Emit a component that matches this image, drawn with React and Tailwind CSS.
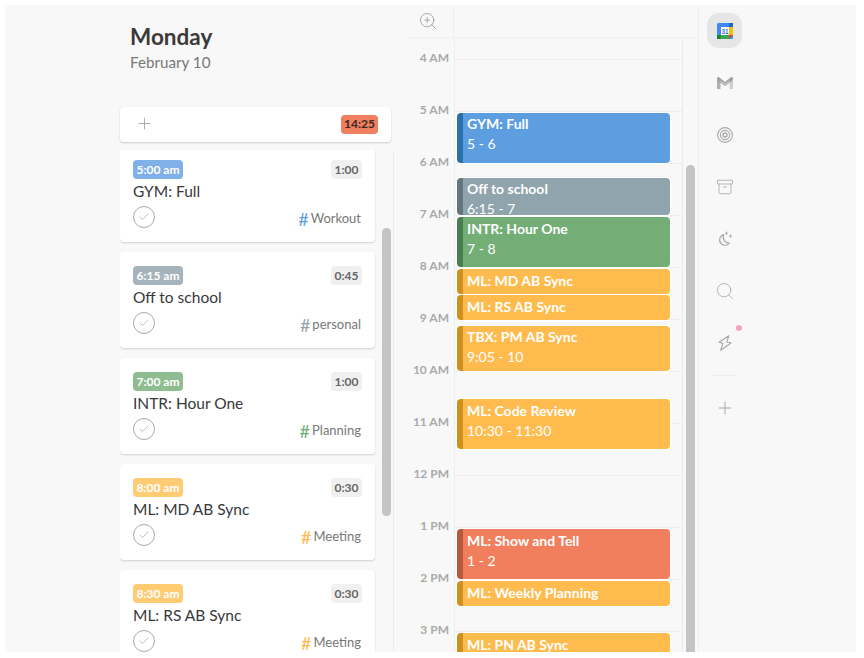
import React from "react";
import { Plus, Search, Archive, ZoomIn, Check } from "lucide-react";

const cards = [
  { time: "5:00 am", timeBg: "bg-[#7fb0e8]", dur: "1:00", title: "GYM: Full", tag: "Workout", hash: "text-[#5c9ee0]" },
  { time: "6:15 am", timeBg: "bg-[#a5b4bc]", dur: "0:45", title: "Off to school", tag: "personal", hash: "text-[#90a4ae]" },
  { time: "7:00 am", timeBg: "bg-[#8fbc90]", dur: "1:00", title: "INTR: Hour One", tag: "Planning", hash: "text-[#73ae76]" },
  { time: "8:00 am", timeBg: "bg-[#ffcb73]", dur: "0:30", title: "ML: MD AB Sync", tag: "Meeting", hash: "text-[#ffb84d]" },
  { time: "8:30 am", timeBg: "bg-[#ffcb73]", dur: "0:30", title: "ML: RS AB Sync", tag: "Meeting", hash: "text-[#ffb84d]" },
];

const hours = ["4 AM", "5 AM", "6 AM", "7 AM", "8 AM", "9 AM", "10 AM", "11 AM", "12 PM", "1 PM", "2 PM", "3 PM"];

const blue = "bg-[#5c9ee0] border-l-[#2a70ad]";
const grey = "bg-[#90a4ae] border-l-[#64757d]";
const green = "bg-[#73ae76] border-l-[#4a7d4d]";
const amber = "bg-[#ffbb4d] border-l-[#cf9020]";
const red = "bg-[#f17f5d] border-l-[#b5583c]";

const events = [
  { top: 75, h: 50, c: blue, t: "GYM: Full", s: "5 - 6", pad: "pt-[1px]" },
  { top: 140, h: 37, c: grey, t: "Off to school", s: "6:15 - 7", pad: "pt-[1px]" },
  { top: 179, h: 50, c: green, t: "INTR: Hour One", s: "7 - 8", pad: "pt-[2px]" },
  { top: 231, h: 25, c: amber, t: "ML: MD AB Sync", pad: "pt-[2px]" },
  { top: 257, h: 25, c: amber, t: "ML: RS AB Sync", pad: "pt-[2px]" },
  { top: 288, h: 45, c: amber, t: "TBX: PM AB Sync", s: "9:05 - 10", pad: "pt-[1px]" },
  { top: 361, h: 50, c: amber, t: "ML: Code Review", s: "10:30 - 11:30", pad: "pt-[2px]" },
  { top: 491, h: 50, c: red, t: "ML: Show and Tell", s: "1 - 2", pad: "pt-[2px]" },
  { top: 543, h: 25, c: amber, t: "ML: Weekly Planning", pad: "pt-[2px]" },
  { top: 595, h: 50, c: amber, t: "ML: PN AB Sync", pad: "pt-[2px]" },
];

function Card({ c }) {
  return (
    <div className="bg-white rounded-[4px] shadow-[0_1px_2px_rgba(0,0,0,0.16)] h-[96px] w-[255px] shrink-0 px-[13px] pt-[14px]">
      <div className="flex justify-between items-start">
        <span className={`${c.timeBg} rounded-[4px] h-[19px] w-[50px] flex items-center justify-center text-white text-[12px] font-bold leading-none`}>{c.time}</span>
        <span className="bg-[#f0f0f0] rounded-[4px] h-[19px] w-[31px] flex items-center justify-center text-[#666] text-[12px] font-bold leading-none">{c.dur}</span>
      </div>
      <div className="text-[15.5px] leading-[22px] mt-[1px] text-[#38383a]">{c.title}</div>
      <div className="flex justify-between items-center mt-[4px] h-[22px]">
        <span className="w-[22px] h-[22px] rounded-full border border-[#aaa] flex items-center justify-center">
          <Check size={12} strokeWidth={1.2} className="text-[#999]" />
        </span>
        <span className="flex items-center pr-[1px] mt-[3px] text-[13px] text-[#777]">
          <span className={`${c.hash} text-[18px] leading-none mr-[2px]`}>#</span>
          {c.tag}
        </span>
      </div>
    </div>
  );
}

function Event({ e }) {
  return (
    <div style={{ top: e.top, height: e.h }} className={`absolute left-[3px] w-[213px] rounded-[4px] border-l-[6px] overflow-hidden pl-[4px] ${e.pad} shadow-[0_0_0_1px_#fff] text-white text-[14px] leading-[20px] ${e.c}`}>
      <div className="font-bold">{e.t}</div>
      {e.s && <div>{e.s}</div>}
    </div>
  );
}

function CalendarIcon() {
  return (
    <svg width="16" height="16" viewBox="0 0 16 16">
      <rect width="16" height="16" rx="1.5" fill="#4285f4" />
      <rect x="12" y="0" width="4" height="4" fill="#1967d2" />
      <rect x="12" y="4" width="4" height="8" fill="#fbbc04" />
      <rect x="0" y="12" width="12" height="4" fill="#34a853" />
      <rect x="0" y="12" width="3.5" height="4" fill="#188038" />
      <path d="M12 12h4l-4 4z" fill="#ea4335" />
      <rect x="4" y="4" width="8" height="8" fill="#fff" />
      <text x="8" y="10.8" textAnchor="middle" fontSize="6.5" fontWeight="700" fill="#3b78d8" fontFamily="Liberation Sans, sans-serif">31</text>
    </svg>
  );
}

function GmailIcon() {
  return (
    <svg width="16" height="12" viewBox="0 0 16 12">
      <path d="M0 2v10h3.5V4.5z" fill="#b0b0b0" />
      <path d="M16 2v10h-3.5V4.5z" fill="#cfcfcf" />
      <path d="M0 1.5C0 .3 1.4-.4 2.4.4L8 5 13.6.4c1-.8 2.4-.1 2.4 1.1L16 3 8 9 0 3z" fill="#a0a0a0" />
      <path d="M3.5 3 8 6.5 12.5 3v2L8 8.5 3.5 5z" fill="#c2c2c2" />
    </svg>
  );
}

function TargetIcon() {
  return (
    <svg width="16" height="16" viewBox="0 0 16 16" fill="none" stroke="#a8a8a8">
      <circle cx="8" cy="8" r="7.4" strokeWidth="1.1" />
      <circle cx="8" cy="8" r="4.6" strokeWidth="1.1" />
      <circle cx="8" cy="8" r="2" strokeWidth="1.3" />
    </svg>
  );
}

function MoonIcon() {
  return (
    <svg width="16" height="16" viewBox="0 0 16 16" fill="none" stroke="#a8a8a8" strokeWidth="1.2" strokeLinejoin="round">
      <path d="M6.8 3.6a5.4 5.4 0 1 0 5.6 8.4A5.8 5.8 0 0 1 6.8 3.6z" />
      <path d="M9.5.6v3.2M7.9 2.2h3.2M13.5 3.5v3.2M11.9 5.1h3.2" strokeWidth="0.9" />
    </svg>
  );
}

function BoltIcon() {
  return (
    <svg width="14" height="16" viewBox="0 0 14 16" fill="none" stroke="#a8a8a8" strokeWidth="1.1" strokeLinejoin="round">
      <path d="M10.8.8 1 7.2l4 1.2-2.4 6.8L13 8l-4.2-1z" />
    </svg>
  );
}

function SideItem({ children, className = "" }) {
  return <div className={`relative w-[35px] h-[35px] flex items-center justify-center rounded-xl ${className}`}>{children}</div>;
}

export default function App() {
  return (
    <div className="w-[864px] h-[658px] bg-white pl-[5px] pt-[5px] overflow-hidden" style={{ fontFamily: "Lato, 'Noto Sans', sans-serif" }}>
      <div className="w-[851px] h-[647px] bg-[#f8f8f8] overflow-hidden flex">
        {/* Day list */}
        <div className="w-[400px] shrink-0 pl-[115px] flex flex-col">
          <div className="h-[102px] shrink-0 pl-[10px] pt-[17px]">
            <div className="text-[22.5px] leading-[30px] font-bold text-[#3a3a38]">Monday</div>
            <div className="text-[15.2px] leading-[20px] text-[#777]">February 10</div>
          </div>
          <div className="w-[271px] h-[35px] shrink-0 bg-white rounded-[4px] shadow-[0_1px_2px_rgba(0,0,0,0.18)] flex items-center justify-between pl-[15px] pr-[13px] relative z-10">
            <Plus size={19} strokeWidth={1} className="text-[#999] -mt-[2px]" />
            <span className="bg-[#ef7f5f] rounded-[4px] w-[37px] h-[19px] -mt-[1px] flex items-center justify-center text-[12px] font-bold text-[#3a2a25] leading-none">14:25</span>
          </div>
          <div className="flex flex-1 mt-[8px] min-h-0 overflow-hidden">
            <div className="flex flex-col gap-[10px] w-[262px] shrink-0 -mt-[4px]">
              {cards.map((c) => <Card key={c.time} c={c} />)}
            </div>
            <div className="w-[9px] shrink-0 pt-[78px]">
              <div className="w-[9px] h-[288px] rounded-full bg-[#c4c4c4]" />
            </div>
            <div className="w-px ml-[2px] bg-[#ededed]" />
          </div>
        </div>

        {/* Timeline */}
        <div className="w-[293px] shrink-0 flex flex-col">
          <div className="h-[33px] shrink-0 flex border-b border-[#f0f0f0]">
            <div className="w-[49px] flex items-center justify-start pl-[13px] border-r border-[#eeeeee]">
              <ZoomIn size={20} strokeWidth={1} className="text-[#999]" />
            </div>
          </div>
          <div className="flex flex-1 min-h-0">
            <div className="w-[278px] shrink-0 relative flex flex-col overflow-hidden border-r border-[#eaeaea]">
              <div className="h-[21px] shrink-0 ml-[49px] border-l border-[#eeeeee]" />
              {hours.map((h) => (
                <div key={h} className="h-[52px] shrink-0 flex items-start">
                  <div className="w-[49px] shrink-0 -mt-[10px] pr-[5px] text-right text-[12px] leading-[18px] font-bold text-[#aaaaaa]">{h}</div>
                  <div className="flex-1 h-full border-l border-t border-[#eeeeee]" />
                </div>
              ))}
              <div className="absolute left-[49px] top-0 bottom-0 w-[229px]">
                {events.map((e) => <Event key={e.t} e={e} />)}
              </div>
            </div>
            <div className="w-[15px] shrink-0 pl-[3px] pt-[127px]">
              <div className="w-[9px] h-[500px] rounded-full bg-[#c4c4c4]" />
            </div>
          </div>
        </div>

        {/* Sidebar */}
        <div className="flex-1 border-l border-[#eeeeee] pl-[8px] pt-[8px] flex flex-col">
          <div className="w-[35px] flex flex-col items-center gap-[17px]">
            <SideItem className="bg-[#e6e6e6]"><CalendarIcon /></SideItem>
            <SideItem><GmailIcon /></SideItem>
            <SideItem><TargetIcon /></SideItem>
            <SideItem><Archive size={18} strokeWidth={1.1} className="text-[#a8a8a8]" /></SideItem>
            <SideItem><MoonIcon /></SideItem>
            <SideItem><Search size={20} strokeWidth={1} className="text-[#a8a8a8]" /></SideItem>
            <SideItem>
              <BoltIcon />
              <span className="absolute right-0 top-[0px] w-[6px] h-[6px] rounded-full bg-[#ff9fc0]" />
            </SideItem>
          </div>
          <div className="w-[25px] h-px bg-[#eeeeee] ml-[5px] mt-[15px]" />
          <div className="w-[35px] mt-[22px] flex justify-center">
            <Plus size={20} strokeWidth={1} className="text-[#999]" />
          </div>
        </div>
      </div>
    </div>
  );
}
